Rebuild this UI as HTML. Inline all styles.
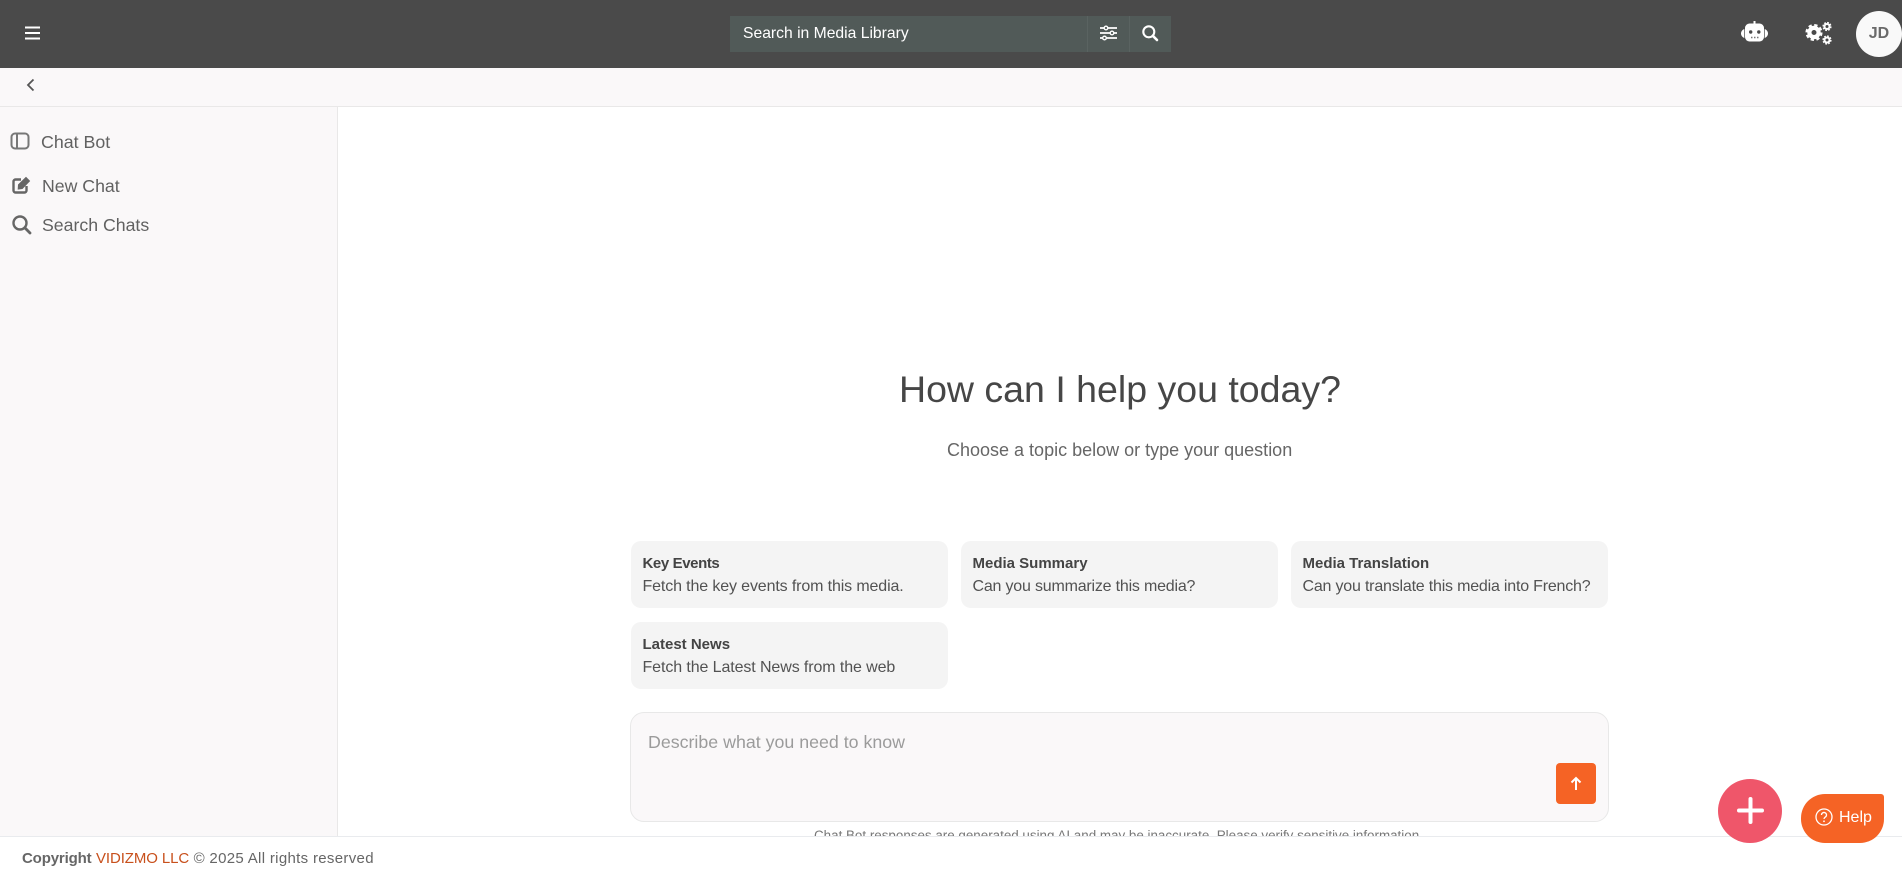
<!DOCTYPE html>
<html lang="en"><head><meta charset="utf-8"><title>Chat Bot</title>
<style>
*{box-sizing:border-box}
html,body{margin:0;padding:0;width:1902px;height:868px;overflow:hidden;background:#fff;font-family:"Liberation Sans",Arial,sans-serif;color:#616161}
.a{position:absolute}
.t{position:absolute;white-space:nowrap;line-height:20px}
svg{position:absolute;display:block;overflow:visible}
#head{left:0;top:0;width:1902px;height:68px;background:#4a4a4a}
#sub{left:0;top:68px;width:1902px;height:39px;background:#faf8f9;border-bottom:1px solid #e9e8e8}
#side{left:0;top:107px;width:338px;height:729px;background:#faf8f9;border-right:1px solid #e9e8e8}
#search{left:730px;top:16px;width:441px;height:36px;background:#515a58}
.card{position:absolute;width:317px;height:67px;background:#f4f4f4;border-radius:10px}
.card b{position:absolute;left:11.500px;top:13px;font-size:15px;line-height:20px;color:#444;white-space:nowrap}
.card span{position:absolute;left:11.500px;top:36px;font-size:16px;line-height:20px;color:#525252;white-space:nowrap}
#input{left:630px;top:712px;width:979px;height:110px;background:#faf8f9;border:1px solid #e8e8e8;border-radius:14px}
#send{left:1556px;top:763px;width:40px;height:41px;background:#f56325;border-radius:4px}
#foot{left:0;top:836px;width:1902px;height:32px;background:#fff;border-top:1px solid #e9ebee}
#fab{left:1718px;top:779px;width:64px;height:64px;border-radius:50%;background:#ef566a}
#help{left:1801px;top:794px;width:83px;height:49px;background:#f56325;border-radius:24px 3px 24px 24px}
#avatar{left:1856px;top:11px;width:46px;height:46px;border-radius:50%;background:#f9f9f9;color:#6a6a6a;font-weight:700;font-size:16px;line-height:46px;text-align:center}
</style></head><body>

<div class="a" id="head"></div>
<svg style="left:25px;top:26px" width="15" height="14" viewBox="0 0 15 14"><path d="M0 1.500h15M0 7h15M0 12.500h15" stroke="#fff" stroke-width="2"/></svg>

<div class="a" id="search"></div>
<div class="t" style="left:743px;top:24px;font-size:15.700px;color:#fff">Search in Media Library</div>
<div class="a" style="left:1087px;top:16px;width:1px;height:36px;background:#5a6361"></div>
<div class="a" style="left:1129px;top:16px;width:1px;height:36px;background:#5a6361"></div>
<svg style="left:1100px;top:25px" width="17" height="16" viewBox="0 0 17 16"><path d="M0 3h17M0 8h17M0 13h17" stroke="#fff" stroke-width="1.800"/><circle cx="6" cy="3" r="1.800" fill="#515a58" stroke="#fff" stroke-width="1.400"/><circle cx="12" cy="8" r="1.800" fill="#515a58" stroke="#fff" stroke-width="1.400"/><circle cx="4.500" cy="13" r="1.800" fill="#515a58" stroke="#fff" stroke-width="1.400"/></svg>
<svg style="left:1142px;top:25px" width="16" height="16" viewBox="0 0 16 16"><circle cx="6.800" cy="6.800" r="5.500" fill="none" stroke="#fff" stroke-width="2.100"/><path d="M10.800 10.800L15 15" stroke="#fff" stroke-width="2.600" stroke-linecap="round"/></svg>

<svg style="left:1741px;top:21px" width="27" height="21" viewBox="0 0 27 21"><path d="M3.300 8C1 9 0 10.800 0 12.500s1 3.500 3.300 4.500z" fill="#fff"/><path d="M23.700 8c2.300 1 3.300 2.800 3.300 4.500s-1 3.500-3.300 4.500z" fill="#fff"/><path d="M13.500 0v4" stroke="#fff" stroke-width="2"/><rect x="4" y="2.500" width="19" height="18" rx="4.500" fill="#fff"/><circle cx="9.700" cy="11" r="1.700" fill="#4a4a4a"/><circle cx="17.800" cy="11" r="1.700" fill="#4a4a4a"/><path d="M10 16.500h7.500" stroke="#777" stroke-width="1.400" stroke-dasharray="1.500 1.500"/></svg>
<svg style="left:1806px;top:22px" width="26" height="23" viewBox="0 0 26 23">
<circle cx="8" cy="10.500" r="4.600" fill="none" stroke="#fff" stroke-width="4.200"/><circle cx="8" cy="10.500" r="7.400" fill="none" stroke="#fff" stroke-width="2.300" stroke-dasharray="3.300 2.510"/>
<circle cx="21" cy="4.500" r="2.500" fill="none" stroke="#fff" stroke-width="2"/><circle cx="21" cy="4.500" r="3.900" fill="none" stroke="#fff" stroke-width="1.400" stroke-dasharray="1.800 1.260"/>
<circle cx="21" cy="18" r="2.500" fill="none" stroke="#fff" stroke-width="2"/><circle cx="21" cy="18" r="3.900" fill="none" stroke="#fff" stroke-width="1.400" stroke-dasharray="1.800 1.260"/></svg>
<div class="a" id="avatar">JD</div>

<div class="a" id="sub"></div>
<svg style="left:26px;top:78px" width="9" height="14" viewBox="0 0 9 14"><path d="M7.500 1.500L2 7l5.500 5.500" fill="none" stroke="#555" stroke-width="1.800"/></svg>

<div class="a" id="side"></div>
<svg style="left:10px;top:132px" width="20" height="18" viewBox="0 0 20 18"><rect x="1.500" y="1.500" width="17" height="15" rx="3.500" fill="none" stroke="#777" stroke-width="2"/><path d="M7 1.500v15" stroke="#777" stroke-width="2"/></svg>
<div class="t" style="left:41px;top:132px;font-size:17.800px">Chat Bot</div>
<svg style="left:12px;top:176px" width="20" height="18" viewBox="0 0 20 18"><path d="M9 3.500H3.500a2 2 0 0 0-2 2v9a2 2 0 0 0 2 2h9a2 2 0 0 0 2-2V10" fill="none" stroke="#666" stroke-width="2.400"/><path d="M6 8.500L14 .8l4.200 4.200-7.700 8-4.800.6z" fill="#666"/></svg>
<div class="t" style="left:42px;top:176px;font-size:17.700px">New Chat</div>
<svg style="left:12px;top:215px" width="19" height="19" viewBox="0 0 19 19"><circle cx="8" cy="8" r="6.500" fill="none" stroke="#666" stroke-width="2.400"/><path d="M12.800 12.800L18 18" stroke="#666" stroke-width="2.800" stroke-linecap="round"/></svg>
<div class="t" style="left:42px;top:215px;font-size:17.700px">Search Chats</div>

<div class="t" style="left:899px;top:367px;line-height:44px;font-size:37.500px;color:#464646">How can I help you today?</div>
<div class="t" style="left:947px;top:440px;font-size:18px;color:#666">Choose a topic below or type your question</div>

<div class="card" style="left:631px;top:541px"><b style="letter-spacing:-.4px">Key Events</b><span style="letter-spacing:-.13px">Fetch the key events from this media.</span></div>
<div class="card" style="left:961px;top:541px"><b>Media Summary</b><span style="letter-spacing:-.2px">Can you summarize this media?</span></div>
<div class="card" style="left:1291px;top:541px"><b>Media Translation</b><span style="letter-spacing:-.2px">Can you translate this media into French?</span></div>
<div class="card" style="left:631px;top:622px"><b>Latest News</b><span style="letter-spacing:-.1px">Fetch the Latest News from the web</span></div>

<div class="a" id="input"></div>
<div class="t" style="left:648px;top:732px;font-size:17.800px;color:#9b9b9b">Describe what you need to know</div>
<div class="a" id="send"></div>
<svg style="left:1570px;top:776px" width="12" height="15" viewBox="0 0 12 15"><path d="M6 14V2M1.500 6.500L6 2l4.500 4.500" fill="none" stroke="#fff" stroke-width="2"/></svg>
<div class="t" style="left:814px;top:826px;font-size:13.400px;color:#777">Chat Bot responses are generated using AI and may be inaccurate. Please verify sensitive information.</div>

<div class="a" id="foot"></div>
<div class="t" style="left:22px;top:849px;font-size:15px;color:#666;letter-spacing:.32px"><b style="letter-spacing:-.15px">Copyright</b> <span style="color:#c8501c;letter-spacing:-.1px">VIDIZMO LLC</span> © 2025 All rights reserved</div>

<div class="a" id="fab"></div>
<svg style="left:1737px;top:797px" width="27" height="27" viewBox="0 0 27 27"><path d="M13.500 2v23M2 13.500h23" stroke="#fff" stroke-width="4" stroke-linecap="round"/></svg>
<div class="a" id="help"></div>
<svg style="left:1815px;top:808px" width="18" height="18" viewBox="0 0 18 18"><circle cx="9" cy="9" r="8" fill="none" stroke="#fff" stroke-width="1.300"/><path d="M6.500 7a2.500 2.500 0 1 1 3.800 2.100C9.400 9.700 9 10.200 9 11" fill="none" stroke="#fff" stroke-width="1.300"/><circle cx="9" cy="13.300" r=".9" fill="#fff"/></svg>
<div class="t" style="left:1839px;top:808px;font-size:16px;color:#fff">Help</div>
</body></html>
